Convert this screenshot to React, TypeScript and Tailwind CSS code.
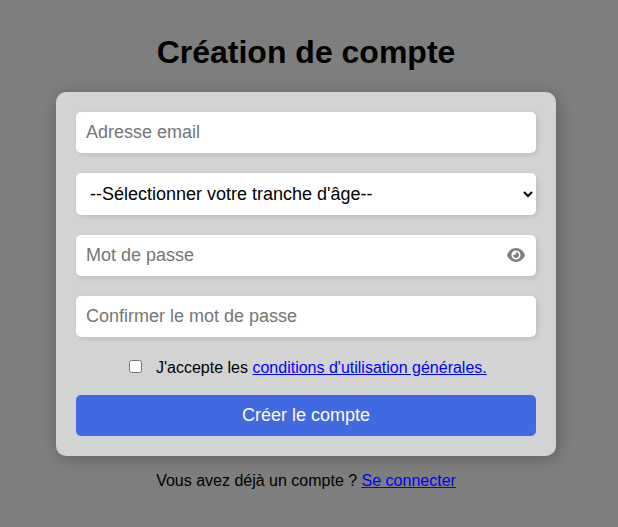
import { FaEye } from "react-icons/fa6";

const field =
  "block w-full rounded-[5px] border-0 bg-white p-[10px] text-[18px] leading-[21px] shadow-[2px_2px_5px_rgba(0,0,0,0.1)] outline-none placeholder:text-[#757575]";

export default function App() {
  return (
    <main className="flex h-[527px] w-[618px] flex-col items-center overflow-hidden bg-[#7e7e7e] pr-[6px] font-['Liberation_Sans',Arial,sans-serif] text-black">
      <h1 className="mt-[34px] text-[32px] leading-[37px] font-bold">Création de compte</h1>
      <form className="mt-[21px] flex h-[364px] w-[500px] flex-col rounded-[10px] bg-[#d3d3d3] p-5 shadow-[2px_2px_15px_rgba(0,0,0,0.25)]">
        <input className={field} type="email" placeholder="Adresse email" />
        <select className="mt-5 block h-[42px] w-full rounded-[5px] border-0 bg-white p-[10px] text-[18px] leading-[22px] shadow-[2px_2px_5px_rgba(0,0,0,0.1)] outline-none">
          <option>--Sélectionner votre tranche d'âge--</option>
        </select>
        <div className="relative mt-5">
          <input className={field} type="password" placeholder="Mot de passe" />
          <FaEye className="absolute top-[12px] right-[11px] h-[16px] w-[18px] text-[#808080]" />
        </div>
        <input className={`mt-5 ${field}`} type="password" placeholder="Confirmer le mot de passe" />
        <label className="mt-[21px] flex h-[19px] items-center pl-[53px] text-[16px] leading-[18px] whitespace-nowrap">
          <input className="relative -top-px mr-[14px] h-[13px] w-[13px]" type="checkbox" />
          <span>
            J'accepte les{" "}
            <a href="#" className="text-[#0000ff] underline">conditions d'utilisation générales.</a>
          </span>
        </label>
        <button type="button" className="mt-[18px] h-[41px] shrink-0 rounded-[5px] bg-[#4169e1] text-[18px] leading-[21px] text-white">
          Créer le compte
        </button>
      </form>
      <p className="mt-4 text-[16px] leading-[18px]">
        Vous avez déjà un compte ? <a href="#" className="text-[#0000ff] underline">Se connecter</a>
      </p>
    </main>
  );
}
